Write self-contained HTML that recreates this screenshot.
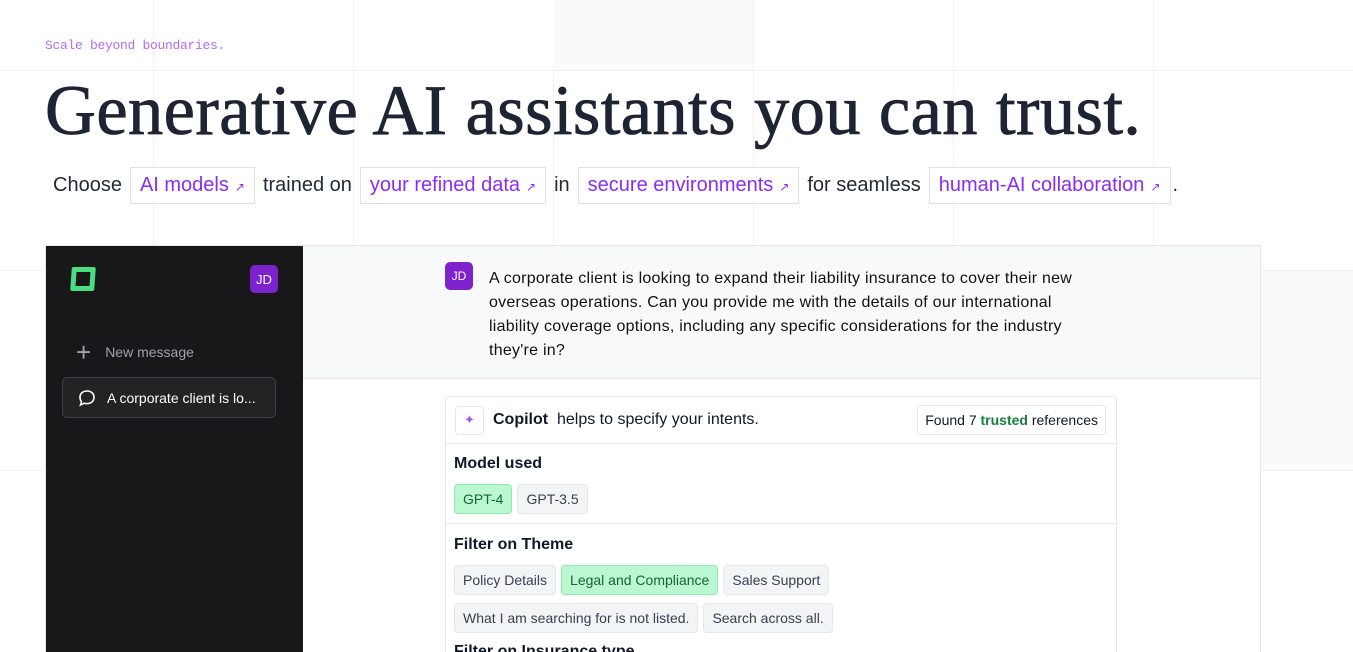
<!DOCTYPE html>
<html><head><meta charset="utf-8"><style>
*{box-sizing:border-box;margin:0;padding:0}
html,body{width:1353px;height:652px;overflow:hidden}
body{background:#fff;font-family:"Liberation Sans",sans-serif;position:relative;color:#111827}
.v{position:absolute;top:0;bottom:0;width:1px;background:#f1f2f4}
.h{position:absolute;left:0;right:0;height:1px;background:#f1f2f4}
.tag{position:absolute;left:45px;top:38px;font-family:"Liberation Mono",monospace;font-size:13px;color:#b06cf5;letter-spacing:-0.3px}
h1{position:absolute;left:45px;top:71px;font-family:"Liberation Serif",serif;font-weight:400;font-size:70.5px;color:#1e2433;letter-spacing:0.4px;white-space:nowrap;-webkit-text-stroke:0.8px #1e2433}
.sub{position:absolute;left:53px;top:167px;font-size:20px;color:#1f2937;display:flex;align-items:center;gap:8px;white-space:nowrap}
.sub .b{border:1px solid #e0e0e3;padding:6px 9px;color:#8b2cf5;background:#fff}
.sub .b small{font-size:12px;margin-left:6px}
.app{position:absolute;left:45px;top:245px;width:1216px;height:420px;border:1px solid #e5e7eb;background:#fff}
.side{position:absolute;left:0;top:0;width:257px;height:100%;background:#18181b}
.logo{position:absolute;left:25px;top:21px;width:24px;height:24px;border:5px solid #4ade80;border-radius:2px;transform:skewX(-4deg)}
.av{position:absolute;width:28px;height:28px;border-radius:5px;background:#7e22ce;color:#fff;font-size:13px;display:flex;align-items:center;justify-content:center}
.nm{position:absolute;left:30px;top:93px;color:#a1a1aa;font-size:14px;display:flex;align-items:center;gap:14px}
.nm span.p{font-size:26px;color:#a1a1aa;font-weight:300;line-height:1}
.conv{position:absolute;left:16px;top:131px;width:214px;height:41px;border:1px solid #3f3f46;background:#232326;border-radius:5px;color:#fff;font-size:14px;display:flex;align-items:center;padding-left:14px;gap:10px}
.q{position:absolute;left:257px;top:0;right:0;height:133px;background:#f8f9fb;border-bottom:1px solid #e5e7eb}
.q p{position:absolute;left:186px;top:21px;width:590px;font-size:16px;line-height:24px;color:#111;letter-spacing:0.25px}
.card{position:absolute;left:399px;top:150px;width:672px;height:300px;border:1px solid #e5e7eb;border-radius:4px}
.ch{height:47px;border-bottom:1px solid #e5e7eb;display:flex;align-items:center;padding-left:9px;font-size:16px}
.ic{width:29px;height:29px;border:1px solid #e5e7eb;border-radius:4px;display:flex;align-items:center;justify-content:center;color:#a855f7;font-size:13px;margin-right:9px}
.found{position:absolute;right:10px;top:8px;border:1px solid #e5e7eb;border-radius:4px;padding:6px 7px;font-size:14px}
.sec{padding:11px 8px 1px;border-bottom:1px solid #e5e7eb}
.sec h4{font-size:16px;font-weight:700;margin-bottom:11px}
.chip{display:inline-block;border:1px solid #e5e7eb;background:#f3f4f6;border-radius:4px;padding:6px 8px;font-size:14px;line-height:16px;color:#374151;margin-right:5px;margin-bottom:8px}
.chip.g{background:#bbf7d0;border-color:#86efac;color:#166534}
</style></head><body>
<div class="v" style="left:153px"></div><div class="v" style="left:353px"></div><div class="v" style="left:553px"></div><div class="v" style="left:753px"></div><div class="v" style="left:953px"></div><div class="v" style="left:1153px"></div>
<div style="position:absolute;left:553px;top:0;width:200px;height:70px;background:#fafafa"></div>
<div style="position:absolute;left:1153px;top:270px;width:200px;height:200px;background:#fafafa"></div>
<div class="h" style="top:70px"></div><div class="h" style="top:270px"></div><div class="h" style="top:470px"></div>
<div class="tag">Scale beyond boundaries.</div>
<h1>Generative AI assistants you can trust.</h1>
<div class="sub">Choose <span class="b">AI models<small>↗</small></span> trained on <span class="b">your refined data<small>↗</small></span> in <span class="b">secure environments<small>↗</small></span> for seamless <span class="b">human-AI collaboration<small>↗</small></span><span style="margin-left:-6px">.</span></div>
<div class="app">
<div class="side">
<div class="logo"></div>
<div class="av" style="left:204px;top:19px">JD</div>
<div class="nm"><span class="p">+</span>New message</div>
<div class="conv"><svg width="20" height="20" viewBox="0 0 20 20" fill="none" stroke="#fff" stroke-width="1.6"><path d="M10 3c4.2 0 7 2.6 7 6.3S14.2 15.6 10 15.6c-1 0-1.9-.1-2.7-.4L3.5 17l1-3.2C3.6 12.7 3 11.1 3 9.3 3 5.6 5.8 3 10 3z"/></svg>A corporate client is lo...</div>
</div>
<div class="q"><div class="av" style="left:142px;top:16px;font-size:12px">JD</div>
<p>A corporate client is looking to expand their liability insurance to cover their new overseas operations. Can you provide me with the details of our international liability coverage options, including any specific considerations for the industry they're in?</p></div>
<div class="card">
<div class="ch"><span class="ic">✦</span><b>Copilot</b>&nbsp; helps to specify your intents.<span class="found">Found 7 <b style="color:#15803d">trusted</b> references</span></div>
<div class="sec"><h4>Model used</h4><span class="chip g">GPT-4</span><span class="chip">GPT-3.5</span></div>
<div class="sec" style="border:none;padding-top:12px"><h4>Filter on Theme</h4><span class="chip">Policy Details</span><span class="chip g">Legal and Compliance</span><span class="chip">Sales Support</span><br><span class="chip">What I am searching for is not listed.</span><span class="chip">Search across all.</span><h4 style="margin-top:2px">Filter on Insurance type</h4></div>
</div>
</div>
</body></html>
